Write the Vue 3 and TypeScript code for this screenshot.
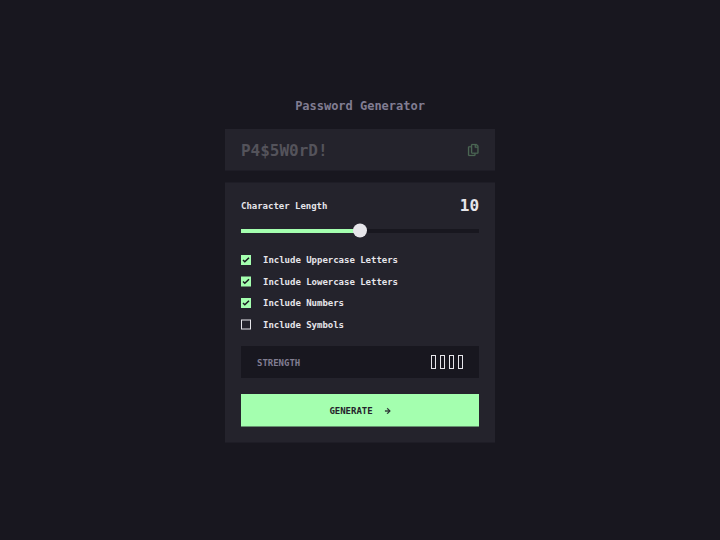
<script setup lang="ts">
import { computed, ref } from 'vue'

interface Option {
  label: string
  checked: boolean
  offset: number
}

const min = 0
const max = 20
const length = ref<number>(10)
const options = ref<Option[]>([
  { label: 'Include Uppercase Letters', checked: true, offset: 0 },
  { label: 'Include Lowercase Letters', checked: true, offset: 0.5 },
  { label: 'Include Numbers', checked: true, offset: 0 },
  { label: 'Include Symbols', checked: false, offset: 0.5 },
])
const percent = computed(() => ((length.value - min) / (max - min)) * 100)
</script>

<template>
  <main class="page">
    <div class="generator">
      <h1 class="title">Password Generator</h1>

      <section class="output">
        <span class="placeholder">P4$5W0rD!</span>
        <svg class="copy" viewBox="0 0 22 24" aria-hidden="true">
          <path
            d="M20.341 3.091 17.909.659A2.25 2.25 0 0 0 16.319 0H8.25A2.25 2.25 0 0 0 6 2.25V4.5H2.25A2.25 2.25 0 0 0 0 6.75v15A2.25 2.25 0 0 0 2.25 24h10.5A2.25 2.25 0 0 0 15 21.75V19.5h3.75A2.25 2.25 0 0 0 21 17.25V4.682a2.25 2.25 0 0 0-.659-1.591ZM12.469 21.75H2.53a.281.281 0 0 1-.281-.281V7.03a.281.281 0 0 1 .281-.281H6v10.5a2.25 2.25 0 0 0 2.25 2.25h4.5v1.969a.282.282 0 0 1-.281.281Zm6-4.5H8.53a.281.281 0 0 1-.281-.281V2.53a.281.281 0 0 1 .281-.281H13.5v4.125c0 .621.504 1.125 1.125 1.125h4.125v9.469a.282.282 0 0 1-.281.281Zm.281-12h-3v-3h.451c.075 0 .147.03.2.082L18.667 4.6a.283.283 0 0 1 .082.199v.451Z"
          />
        </svg>
      </section>

      <section class="panel">
        <div class="length-row">
          <span>Character Length</span>
          <span class="length-value">{{ length }}</span>
        </div>

        <div class="slider">
          <div class="fill" :style="{ width: percent + '%' }"></div>
          <svg class="thumb" viewBox="0 0 14 15" aria-hidden="true">
            <circle cx="7" cy="7.5" r="7" />
          </svg>
        </div>

        <ul class="options">
          <li v-for="option in options" :key="option.label" @click="option.checked = !option.checked">
            <svg class="box" viewBox="0 0 10 11" aria-hidden="true">
              <g :transform="`translate(0 ${option.offset})`">
                <template v-if="option.checked">
                  <rect width="10" height="10" fill="#a4ffaf" />
                  <path d="M2 5 3.8 6.8 8 2.7" fill="none" stroke="#18171f" stroke-width="1.5" />
                </template>
                <rect v-else x=".5" y=".5" width="9" height="9" fill="none" stroke="#e6e5ea" />
              </g>
            </svg>
            <span>{{ option.label }}</span>
          </li>
        </ul>

        <div class="strength">
          <span class="strength-label">STRENGTH</span>
          <div class="bars">
            <i v-for="n in 4" :key="n"></i>
          </div>
        </div>

        <button class="generate" type="button">
          <span>GENERATE</span>
          <svg class="arrow" viewBox="0 0 12 12" aria-hidden="true">
            <path d="m5.106 12 6-6-6-6-1.265 1.265 3.841 3.84H.001v1.79h7.681l-3.841 3.84z" />
          </svg>
        </button>
      </section>
    </div>
  </main>
</template>

<style>
body {
  background: #18171f;
}
</style>

<style scoped>
* {
  box-sizing: border-box;
}

.page {
  display: flex;
  justify-content: center;
  height: 540px;
  padding-top: 98px;
  background: #18171f;
  color: #e6e5ea;
  font: bold 9px/12px 'DejaVu Sans Mono', 'Liberation Mono', monospace;
  letter-spacing: -0.002em;
}

.generator {
  width: 270px;
}

.title {
  margin: 0 0 15px;
  color: #817d92;
  font-size: 12px;
  line-height: 16px;
  text-align: center;
}

.output {
  display: flex;
  align-items: center;
  justify-content: space-between;
  height: 42px;
  margin-bottom: 11px;
  padding: 1px 16px 0;
  border-bottom: 1px solid #1e1d26;
  background: #24232c;
}

.placeholder {
  color: #54535b;
  font-size: 16px;
  line-height: 21px;
}

.copy {
  width: 11px;
  height: 12px;
  margin-right: 0.5px;
  overflow: visible;
  fill: #a4ffaf;
  stroke: #a4ffaf;
  stroke-width: 0.5;
  opacity: 0.3;
}

.panel {
  height: 261px;
  padding: 12px 16px 15px;
  border-top: 1px solid #1e1d26;
  border-bottom: 1px solid #1e1d26;
  background: #24232c;
}

.length-row {
  display: flex;
  align-items: center;
  justify-content: space-between;
  height: 21px;
}

.length-value {
  font-size: 16px;
  line-height: 21px;
}

.slider {
  display: flex;
  align-items: center;
  height: 4px;
  margin-top: 13px;
  background: #18171f;
}

.fill {
  height: 4px;
  background: #a4ffaf;
}

.thumb {
  flex: none;
  width: 14px;
  height: 15px;
  margin: 0 0 1px -7px;
  fill: #e6e5ea;
}

.options {
  display: grid;
  gap: 9.5px;
  margin: 21px 0 0;
  padding: 0;
  list-style: none;
}

.options li {
  display: flex;
  gap: 12px;
  height: 12px;
}

.box {
  flex: none;
  width: 10px;
  height: 11px;
  margin-top: 1px;
}

.options li:nth-child(even) .box {
  margin-top: 0.5px;
}

.strength {
  display: flex;
  align-items: center;
  justify-content: space-between;
  height: 32px;
  margin-top: 15.5px;
  padding: 0 16px;
  background: #18171f;
  color: #817d92;
}

.strength-label {
  padding-top: 1px;
}

.bars {
  display: flex;
  gap: 4px;
}

.bars i {
  width: 5px;
  height: 14px;
  border: 1px solid #e6e5ea;
}

.generate {
  display: flex;
  align-items: center;
  justify-content: center;
  gap: 12px;
  width: 100%;
  height: 33px;
  margin-top: 16px;
  padding: 1px 0 0;
  border: 0;
  border-bottom: 1px solid #64916e;
  background: #a4ffaf;
  color: #24232c;
  font: inherit;
  letter-spacing: inherit;
}

.arrow {
  width: 6px;
  height: 6px;
  overflow: visible;
  fill: #24232c;
  stroke: #24232c;
  stroke-width: 0.5;
}
</style>
